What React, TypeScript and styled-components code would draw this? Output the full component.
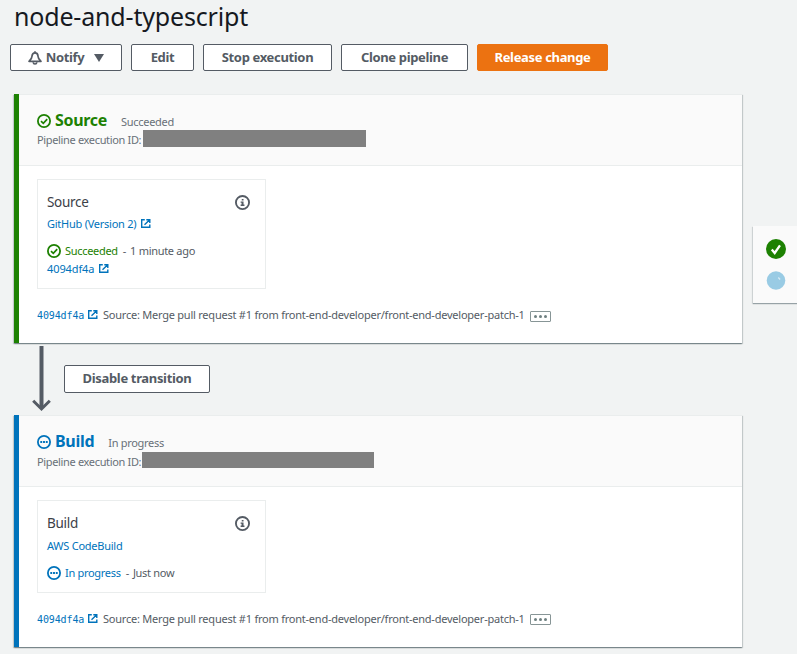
import React from "react";
import styled, { createGlobalStyle } from "styled-components";

const Global = createGlobalStyle`
  * { box-sizing: border-box; }
  body {
    margin: 0;
    background: #f1f3f3;
    color: #545b64;
    font-family: "Noto Sans", sans-serif;
    font-size: 11px;
    letter-spacing: -0.3px;
    white-space: nowrap;
    overflow: hidden;
  }
  svg { display: block; flex: none; }
`;

const Page = styled.div`
  display: flex;
  width: 797px;
  height: 654px;
  overflow: hidden;
`;
const Main = styled.main`
  width: 742px;
  flex: none;
`;
const Title = styled.h1`
  margin: 0;
  padding-left: 14px;
  height: 44px;
  line-height: 33px;
  font-size: 25px;
  font-weight: 400;
  color: #16191f;
  letter-spacing: -0.18px;
`;
const Toolbar = styled.div`
  display: flex;
  gap: 9px;
  padding-left: 10px;
  margin-bottom: 23px;
`;
const Button = styled.button<{ $width: number; $primary?: boolean; $height?: number }>`
  display: flex;
  align-items: center;
  justify-content: center;
  width: ${(p) => p.$width}px;
  height: ${(p) => p.$height ?? 27}px;
  padding: 0 0 2px;
  border: 1px solid ${(p) => (p.$primary ? "#ec7211" : "#545b64")};
  border-radius: 2px;
  background: ${(p) => (p.$primary ? "#ec7211" : "#fff")};
  color: ${(p) => (p.$primary ? "#fff" : "#545b64")};
  font: 700 13px "Noto Sans", sans-serif;
  letter-spacing: -0.34px;

  > svg { margin-top: 2px; }
`;
const NotifyLabel = styled.span`
  margin: 0 10px 0 4px;
`;
const Card = styled.section<{ $accent: string; $height: number }>`
  margin-left: 14px;
  width: 728px;
  height: ${(p) => p.$height}px;
  border-left: 5px solid ${(p) => p.$accent};
  background: #fff;
  box-shadow: 0 1px 1px 0 rgba(0, 28, 36, 0.3), 1px 1px 1px 0 rgba(0, 28, 36, 0.15),
    -1px 1px 1px 0 rgba(0, 28, 36, 0.15);
`;
const CardHeader = styled.header`
  height: 72px;
  padding: 15px 0 0 18px;
  border-top: 1px solid #eaeded;
  border-bottom: 1px solid #eaeded;
  background: #fafafa;
  color: #687078;
`;
const StageLine = styled.div`
  display: flex;
  align-items: center;
  height: 20px;

  > svg { margin-top: 2px; }
`;
const StageName = styled.h2<{ $color: string }>`
  margin: 0 14px 0 4px;
  font-size: 16px;
  line-height: 20px;
  font-weight: 700;
  letter-spacing: -0.3px;
  color: ${(p) => p.$color};
`;
const StageStatus = styled.span`
  padding-top: 2px;
`;
const ExecutionLine = styled.div<{ $shift: number }>`
  display: flex;
  margin-top: ${(p) => p.$shift}px;
  line-height: 20px;
`;
const ExecutionLabel = styled.span<{ $width: number }>`
  width: ${(p) => p.$width}px;
  letter-spacing: -0.34px;
`;
const Redacted = styled.span<{ $width: number; $height: number }>`
  width: ${(p) => p.$width}px;
  height: ${(p) => p.$height}px;
  background: #808080;
`;
const CardBody = styled.div`
  padding: 13px 0 0 18px;
`;
const ActionBox = styled.div<{ $height: number }>`
  width: 229px;
  height: ${(p) => p.$height}px;
  padding: 11px 15px 0 9px;
  border: 1px solid #eaeded;
`;
const ActionTitle = styled.div`
  display: flex;
  align-items: center;
  justify-content: space-between;
  height: 21px;
  font-size: 13.5px;
  color: #3c4148;

  > svg { margin-top: 2px; }
`;
const Provider = styled.div<{ $drop: number }>`
  display: flex;
  align-items: center;
  height: 20px;
  margin: ${(p) => p.$drop}px 0 7px;
  color: #0073bb;
`;
const StatusLine = styled.div`
  display: flex;
  align-items: center;
  height: 20px;

  > svg { margin-top: 2px; }
`;
const StatusText = styled.span<{ $color: string }>`
  margin: 0 5px 0 4px;
  color: ${(p) => p.$color};
`;
const Age = styled.span`
  margin-left: 4px;
`;
const RevisionLine = styled.div`
  display: flex;
  align-items: center;
  height: 16px;
`;
const LinkText = styled.a`
  color: #0073bb;
  margin-right: 5px;
`;
const ProviderText = styled(LinkText)`
  letter-spacing: -0.25px;
`;
const RevisionText = styled(LinkText)`
  letter-spacing: -0.1px;
`;
const CommitLine = styled.div`
  display: flex;
  align-items: center;
  height: 20px;
  margin-top: 15px;
`;
const CommitHash = styled.a`
  width: 51px;
  padding-top: 2px;
  color: #0073bb;
  font-family: "DejaVu Sans Mono", monospace;
  font-size: 10px;
  letter-spacing: -0.12px;
`;
const CommitMessage = styled.span`
  width: 427px;
  margin-left: 5px;
  letter-spacing: -0.23px;
`;
const More = styled.span<{ $drop: number }>`
  display: flex;
  align-items: center;
  justify-content: center;
  gap: 2px;
  width: 21px;
  height: 11px;
  margin-top: ${(p) => p.$drop}px;
  border: 1px solid #879596;
  border-radius: 1px;
`;
const Dot = styled.i`
  width: 3px;
  height: 3px;
  border-radius: 50%;
  background: #6f8081;
`;
const Transition = styled.div`
  display: flex;
  align-items: flex-start;
  height: 72px;
  padding: 3px 0 0 32px;
`;
const TransitionAction = styled.div`
  padding: 19px 0 0 13px;
`;
const Rail = styled.aside`
  display: flex;
  flex-direction: column;
  align-items: center;
  gap: 12px;
  width: 50px;
  height: 77px;
  flex: none;
  margin: 226px 0 0 11px;
  padding: 13px 5px 0 0;
  background: #fafafa;
  box-shadow: 0 1px 1px 0 rgba(0, 28, 36, 0.3), -1px 1px 1px 0 rgba(0, 28, 36, 0.1);
`;

const GREEN = "#1d8102";
const BLUE = "#0073bb";

const CheckIcon = () => (
  <svg width="14" height="14" viewBox="0 0 14 14" fill="none" stroke={GREEN}>
    <circle cx="7" cy="7" r="6.1" strokeWidth="1.8" />
    <path d="M4 7.1 6.3 9.3 10.2 5.1" strokeWidth="1.7" />
  </svg>
);
const ProgressIcon = () => (
  <svg width="14" height="14" viewBox="0 0 14 14" fill={BLUE}>
    <circle cx="7" cy="7" r="6.1" fill="none" stroke={BLUE} strokeWidth="1.8" />
    <path d="M3.3 6.1h1.9v1.8H3.3zM6.05 6.1h1.9v1.8h-1.9zM8.8 6.1h1.9v1.8H8.8z" />
  </svg>
);
const InfoIcon = () => (
  <svg width="15" height="15" viewBox="0 0 16 16" fill="none" stroke="#545b64">
    <circle cx="8" cy="8" r="7" strokeWidth="2" />
    <path d="M7.2 4.2h1.9v1.6H7.2zM6 6.8h3.1v3.4h1v1.4H6v-1.4h1V8.2H6z" fill="#545b64" stroke="none" />
  </svg>
);
const ExternalIcon = () => (
  <svg width="10" height="9" viewBox="0 0 10 9" fill="none" stroke={BLUE} strokeWidth="1.4">
    <path d="M3.8.7H.7v7.6h8.1V5.5M5.3.7h3.5V4M8.7.8 3.5 5.8" />
  </svg>
);
const BellIcon = () => (
  <svg width="14" height="14" viewBox="0 0 14 14" fill="none" stroke="#545b64" strokeWidth="1.7" strokeLinejoin="round">
    <path d="M7 .3v1.6M7 1.9C4.8 1.9 4 3.6 4 5.3 4 7.4 3 8.6 1 10.3h12C11 8.6 10 7.4 10 5.3 10 3.6 9.2 1.9 7 1.9Z" />
    <path d="M5.2 11.2C5.4 13.6 8.6 13.6 8.8 11.2" />
  </svg>
);
const CaretIcon = () => (
  <svg width="10" height="8" viewBox="0 0 10 8">
    <path d="M0 0h10L5 8z" fill="#545b64" />
  </svg>
);
const ArrowIcon = () => (
  <svg width="19" height="66" viewBox="0 0 19 66" fill="none" stroke="#545b64">
    <path d="M9.5 0v62" strokeWidth="4" />
    <path d="M1.2 54.7 9.5 63 17.8 54.7" strokeWidth="3" />
  </svg>
);
const DoneBadge = () => (
  <svg width="20" height="20" viewBox="0 0 20 20">
    <circle cx="10" cy="10" r="10" fill={GREEN} />
    <path d="M5.8 10.5 8.7 14 14 6.4" fill="none" stroke="#fff" strokeWidth="2.3" />
  </svg>
);
const RunningBadge = () => (
  <svg width="20" height="19" viewBox="0 0 20 19">
    <circle cx="10" cy="9.5" r="9.3" fill="#99cbe4" />
    <path d="m12.3 6.5 1.8 2" stroke="#d7ebf5" strokeWidth="1.2" />
  </svg>
);

type StageProps = {
  name: string;
  status: string;
  age: string;
  provider: string;
  running?: boolean;
  revision?: string;
  height: number;
  boxHeight: number;
  redacted: [number, number];
};

function Stage({ name, status, age, provider, running, revision, height, boxHeight, redacted }: StageProps) {
  const color = running ? BLUE : GREEN;
  const icon = running ? <ProgressIcon /> : <CheckIcon />;
  return (
    <Card $accent={color} $height={height}>
      <CardHeader>
        <StageLine>
          {icon}
          <StageName $color={color}>{name}</StageName>
          <StageStatus>{status}</StageStatus>
        </StageLine>
        <ExecutionLine $shift={running ? 1 : 0}>
          <ExecutionLabel $width={running ? 105 : 106}>Pipeline execution ID:</ExecutionLabel>
          <Redacted $width={redacted[0]} $height={redacted[1]} />
        </ExecutionLine>
      </CardHeader>
      <CardBody>
        <ActionBox $height={boxHeight}>
          <ActionTitle>
            {name}
            <InfoIcon />
          </ActionTitle>
          <Provider $drop={running ? 2 : 1}>
            <ProviderText>{provider}</ProviderText>
            {!running && <ExternalIcon />}
          </Provider>
          <StatusLine>
            {icon}
            <StatusText $color={color}>{status}</StatusText>-<Age>{age}</Age>
          </StatusLine>
          {revision && (
            <RevisionLine>
              <RevisionText>{revision}</RevisionText>
              <ExternalIcon />
            </RevisionLine>
          )}
        </ActionBox>
        <CommitLine>
          <CommitHash>4094df4a</CommitHash>
          <ExternalIcon />
          <CommitMessage>
            Source: Merge pull request #1 from front-end-developer/front-end-developer-patch-1
          </CommitMessage>
          <More $drop={running ? 2 : 4}>
            <Dot />
            <Dot />
            <Dot />
          </More>
        </CommitLine>
      </CardBody>
    </Card>
  );
}

export default function App() {
  return (
    <Page>
      <Global />
      <Main>
        <Title>node-and-typescript</Title>
        <Toolbar>
          <Button $width={112}>
            <BellIcon />
            <NotifyLabel>Notify</NotifyLabel>
            <CaretIcon />
          </Button>
          <Button $width={63}>Edit</Button>
          <Button $width={129}>Stop execution</Button>
          <Button $width={127}>Clone pipeline</Button>
          <Button $width={131} $primary>
            Release change
          </Button>
        </Toolbar>
        <Stage
          name="Source"
          status="Succeeded"
          age="1 minute ago"
          provider="GitHub (Version 2)"
          revision="4094df4a"
          height={249}
          boxHeight={110}
          redacted={[223, 17]}
        />
        <Transition>
          <ArrowIcon />
          <TransitionAction>
            <Button $width={146} $height={28}>
              Disable transition
            </Button>
          </TransitionAction>
        </Transition>
        <Stage
          name="Build"
          status="In progress"
          age="Just now"
          provider="AWS CodeBuild"
          running
          height={232}
          boxHeight={93}
          redacted={[232, 16]}
        />
      </Main>
      <Rail>
        <DoneBadge />
        <RunningBadge />
      </Rail>
    </Page>
  );
}
